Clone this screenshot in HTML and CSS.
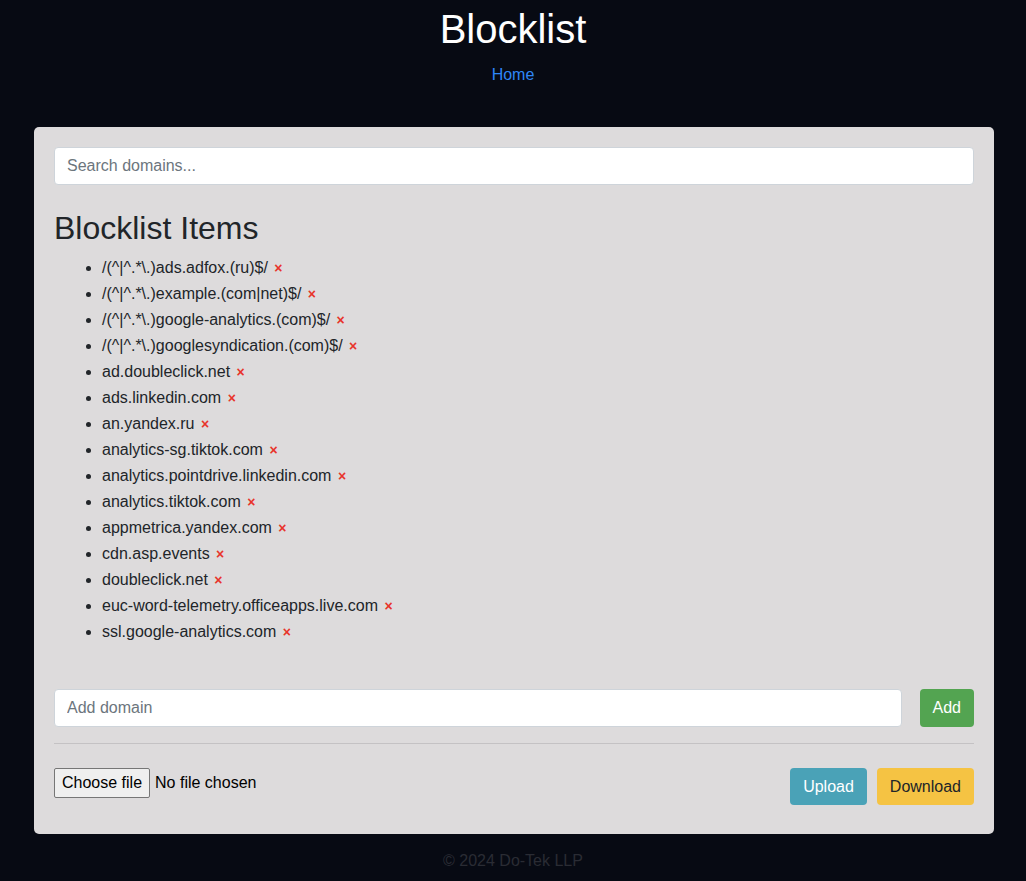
FILE: index.html
```html
<!DOCTYPE html>
<html lang="en">
<head>
<meta charset="utf-8">
<title>Blocklist</title>
<link rel="stylesheet" href="styles.css">
</head>
<body>
<header class="site-header">
  <h1 class="site-title">Blocklist</h1>
  <nav class="site-nav"><a href="#" class="nav-link">Home</a></nav>
</header>
<main class="card">
  <input class="form-input" type="text" placeholder="Search domains...">
  <h2 class="section-title">Blocklist Items</h2>
  <ul class="block-list">
    <li>/(^|^.*\.)ads.adfox.(ru)$/ <span class="remove">×</span></li>
    <li>/(^|^.*\.)example.(com|net)$/ <span class="remove">×</span></li>
    <li>/(^|^.*\.)google-analytics.(com)$/ <span class="remove">×</span></li>
    <li>/(^|^.*\.)googlesyndication.(com)$/ <span class="remove">×</span></li>
    <li>ad.doubleclick.net <span class="remove">×</span></li>
    <li>ads.linkedin.com <span class="remove">×</span></li>
    <li>an.yandex.ru <span class="remove">×</span></li>
    <li>analytics-sg.tiktok.com <span class="remove">×</span></li>
    <li>analytics.pointdrive.linkedin.com <span class="remove">×</span></li>
    <li>analytics.tiktok.com <span class="remove">×</span></li>
    <li>appmetrica.yandex.com <span class="remove">×</span></li>
    <li>cdn.asp.events <span class="remove">×</span></li>
    <li>doubleclick.net <span class="remove">×</span></li>
    <li>euc-word-telemetry.officeapps.live.com <span class="remove">×</span></li>
    <li>ssl.google-analytics.com <span class="remove">×</span></li>
  </ul>
  <div class="add-row">
    <input class="form-input add-input" type="text" placeholder="Add domain">
    <button class="btn btn-green">Add</button>
  </div>
  <hr class="divider">
  <div class="file-row">
    <label class="file-picker">
      <input class="file-native" type="file">
      <span class="file-button">Choose file</span>
      <span class="file-name">No file chosen</span>
    </label>
    <div class="file-actions">
      <button class="btn btn-teal">Upload</button>
      <button class="btn btn-yellow">Download</button>
    </div>
  </div>
</main>
<footer class="site-footer">© 2024 Do-Tek LLP</footer>
</body>
</html>
```
FILE: styles.css
```css
* { box-sizing: border-box; }
body {
  margin: 0;
  background: #070a13;
  font-family: "Liberation Sans", Arial, sans-serif;
  font-size: 16px;
  line-height: 1.5;
  color: #212529;
}
.site-header {
  text-align: center;
  padding-top: 5px;
}
.site-title {
  margin: 0;
  font-size: 40px;
  font-weight: 400;
  line-height: 48px;
  color: #ffffff;
}
.site-nav {
  margin-top: 10px;
  line-height: 24px;
}
.nav-link {
  color: #2e86f7;
  text-decoration: none;
}
.card {
  margin: 40px 32px 0 34px;
  background: #dddbdc;
  border-radius: 5px;
  padding: 20px 20px 29px;
}
.form-input {
  display: block;
  width: 100%;
  height: 38px;
  padding: 6px 12px;
  font-family: inherit;
  font-size: 16px;
  color: #212529;
  background: #ffffff;
  border: 1px solid #ced4da;
  border-radius: 4px;
}
.form-input::placeholder { color: #6c757d; }
.section-title {
  margin: 24px 0 8px;
  font-size: 32px;
  font-weight: 400;
  line-height: 38px;
  color: #212529;
}
.block-list {
  margin: 0 0 44px;
  padding-left: 48px;
  line-height: 26px;
}
.remove {
  margin-left: 2px;
  color: #e8342b;
  font-size: 14px;
  font-weight: 700;
  cursor: pointer;
}
.add-row {
  display: flex;
  gap: 18px;
}
.add-input { flex: 1; }
.btn {
  height: 38px;
  padding: 0 13px;
  font-family: inherit;
  font-size: 16px;
  border: none;
  border-radius: 4px;
  cursor: pointer;
}
.btn-green { background: #53a451; color: #ffffff; }
.btn-teal { background: #4aa2b7; color: #ffffff; height: 37px; }
.btn-yellow { background: #f5c343; color: #212529; height: 37px; }
.divider {
  margin: 16px 0 24px;
  border: 0;
  border-top: 1px solid #c4c2c4;
}
.file-row {
  display: flex;
  justify-content: space-between;
  align-items: flex-start;
}
.file-picker {
  display: flex;
  align-items: center;
  gap: 5px;
  cursor: pointer;
}
.file-native { display: none; }
.file-button {
  height: 30px;
  padding: 0 7px;
  line-height: 28px;
  background: #efefef;
  border: 1px solid #767676;
  border-radius: 2px;
  color: #000000;
}
.file-name { color: #000000; }
.file-actions {
  display: flex;
  gap: 10px;
}
.site-footer {
  text-align: center;
  color: #2a2c34;
  line-height: 24px;
  padding-top: 15px;
}
```
